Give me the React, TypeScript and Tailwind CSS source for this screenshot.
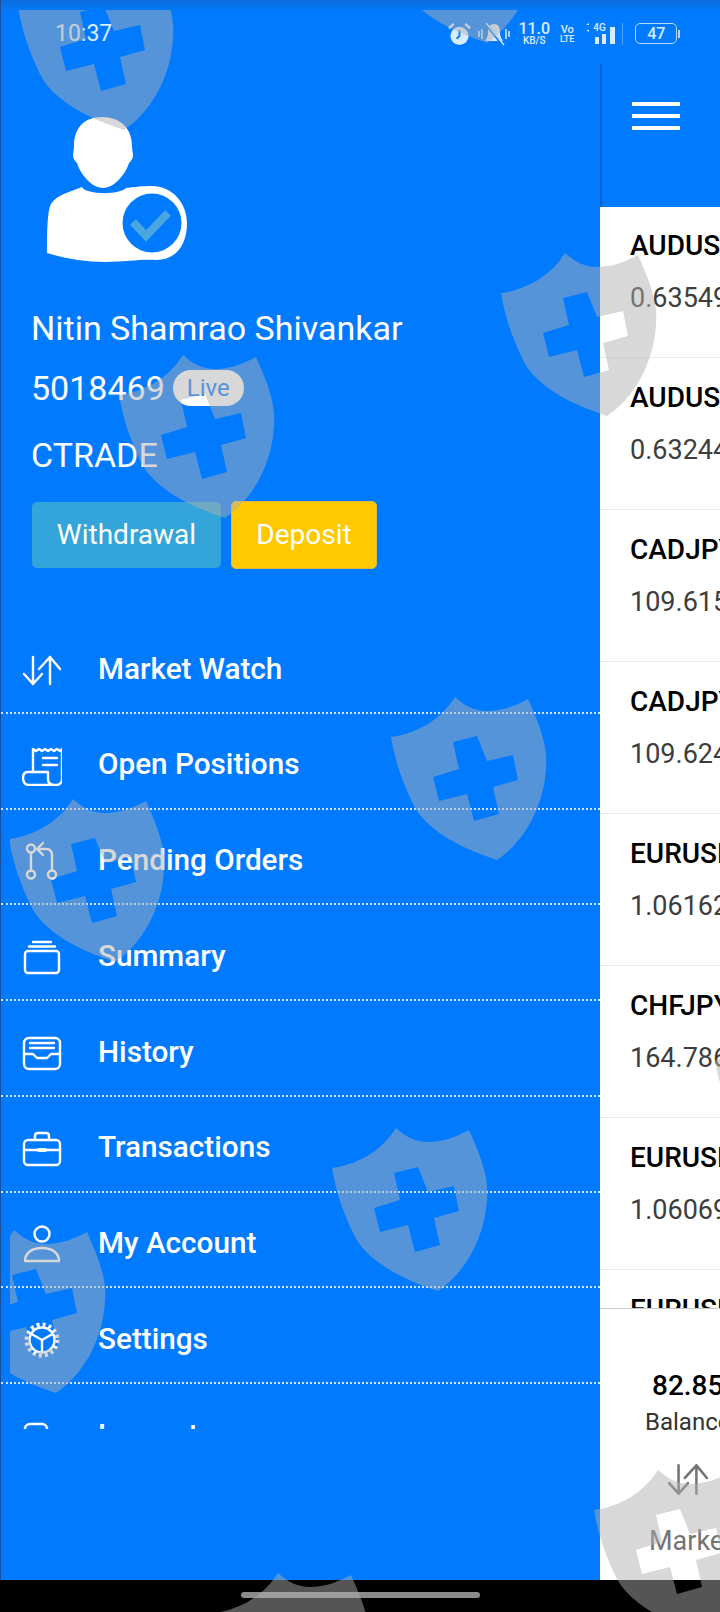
import React from 'react';

const SHIELD_OUTLINE =
  'M1 41C25 38 50 25 65 1C75 10 85 15 97 15C112 15 125 10 138 3C150 30 158 50 156 72C154 110 135 145 107 164C65 150 35 132 23 108C12 85 5 65 1 41Z';
const SHIELD_CROSS = 'M63 46L87 40L97 65L123 59L128 84L103 91L109 118L84 125L77 98L49 105L43 81L69 73Z';

// watermark shields, offsets are inside the clip layer
const shields = [
  'left-[7px] top-[-44px]',
  'left-[370px] top-[-131px]',
  'left-[490px] top-[242px]',
  'left-[108px] top-[344px]',
  'left-[380px] top-[686px]',
  'left-[-2px] top-[788px]',
  'left-[321px] top-[1117px]',
  'left-[-61px] top-[1219px]',
  'left-[704px] top-[1009px]',
  'left-[583px] top-[1459px]',
  'left-[203px] top-[1562px]',
];

function Shield({ className }: { className: string }) {
  return (
    <svg viewBox="0 0 160 165" className={`absolute h-[165px] w-[160px] ${className}`}>
      <path d={`${SHIELD_OUTLINE}${SHIELD_CROSS}`} fill="#afafaf" fillOpacity="0.486" fillRule="evenodd" />
    </svg>
  );
}

function Avatar() {
  return (
    <svg viewBox="0 0 142 148" className="ml-[45px] h-[148px] w-[142px]">
      <path
        fill="#fff"
        d="M56 0C38 0 28 11 28 29C28 33 27 36 27 38C27 42 29 44 31 46C34 56 45 71 57 71C69 71 80 56 83 46C85 44 87 42 87 38C87 36 86 33 86 29C86 11 74 0 56 0Z"
      />
      <path
        fill="#fff"
        d="M36 70C24 75 10 78 5 87C1 94 1 120 1 136C20 142 40 145 60 145C80 145 95 142 110 143C130 143 141 128 141 106C141 86 126 69 106 69C95 69 88 70 80 71C74 78 40 78 36 70Z"
      />
      <circle cx="106" cy="106" r="29.5" fill="#007bff" />
      <path d="M87 105L100 119L122 96" fill="none" stroke="#4aa5e0" strokeWidth="8" />
    </svg>
  );
}

function Svg({ children, className }: { children: React.ReactNode; className?: string }) {
  return (
    <svg
      viewBox="0 0 40 40"
      fill="none"
      stroke="currentColor"
      strokeWidth="2.4"
      strokeLinecap="round"
      strokeLinejoin="round"
      className={className ?? 'mt-[2px] h-10 w-10 shrink-0'}
    >
      {children}
    </svg>
  );
}

const ArrowsIcon = ({ className }: { className?: string }) => (
  <Svg className={className}>
    <path d="M11 7V34M2 24L11 34L20 24" />
    <path d="M28 34V7M17 19L28 7L38 19" />
  </Svg>
);

const icons: Record<string, React.ReactNode> = {
  market: <ArrowsIcon />,
  positions: (
    <Svg>
      <path d="M11 26V3L14 5L17 3L20 5L23 3L26 5L29 3L32 5L35 3L38 5L40 3V33C40 37 37 39 34 39" />
      <path d="M21 12H35M21 19H35" />
      <path d="M6 26H26V33C26 37 29 39 33 39H7C3 39 1 36 1 32C1 28 3 26 6 26Z" />
    </Svg>
  ),
  pending: (
    <Svg>
      <circle cx="9" cy="7.5" r="4" />
      <circle cx="9" cy="33.5" r="4" />
      <circle cx="30" cy="33.5" r="4" />
      <path d="M9 11.5V29.5M30 29.5V14C30 10 28 8 24 8H16M21 2L15 8L21 14" />
    </Svg>
  ),
  summary: (
    <Svg>
      <rect x="3" y="14" width="34" height="22" rx="3" />
      <path d="M7 9.500H33M11 5H29" />
    </Svg>
  ),
  history: (
    <Svg>
      <rect x="2" y="5" width="36" height="31" rx="5" />
      <path d="M2 21H11L15 25H25L29 21H38M8 10H32M8 15H32" />
    </Svg>
  ),
  transactions: (
    <Svg>
      <rect x="2" y="11" width="36" height="25" rx="4" />
      <path d="M13 11V7C13 5 14 4 16 4H24C26 4 27 5 27 7V11M2 21H38" />
      <path d="M17 21H23" strokeWidth="4" />
    </Svg>
  ),
  account: (
    <Svg>
      <circle cx="20" cy="10" r="7.500" />
      <path d="M3 37C3 29 10 24 20 24C30 24 37 29 37 37Z" />
    </Svg>
  ),
  settings: (
    <Svg>
      <circle cx="20" cy="20" r="12.500" />
      <circle cx="20" cy="20" r="15.500" strokeWidth="4" strokeDasharray="3 3.100" strokeLinecap="butt" />
      <path d="M20 20V32M20 20L9.500 14M20 20L30.500 14" />
    </Svg>
  ),
  logout: (
    <Svg>
      <rect x="3" y="8" width="22" height="28" rx="5" />
    </Svg>
  ),
};

const menu = [
  { key: 'market', label: 'Market Watch' },
  { key: 'positions', label: 'Open Positions' },
  { key: 'pending', label: 'Pending Orders' },
  { key: 'summary', label: 'Summary' },
  { key: 'history', label: 'History' },
  { key: 'transactions', label: 'Transactions' },
  { key: 'account', label: 'My Account' },
  { key: 'settings', label: 'Settings' },
  { key: 'logout', label: 'Log out' },
];

const quotes = [
  { symbol: 'AUDUSD', price: '0.63549' },
  { symbol: 'AUDUSD', price: '0.63244' },
  { symbol: 'CADJPY', price: '109.615' },
  { symbol: 'CADJPY', price: '109.624' },
  { symbol: 'EURUSD', price: '1.06162' },
  { symbol: 'CHFJPY', price: '164.786' },
  { symbol: 'EURUSD', price: '1.06069' },
  { symbol: 'EURUSD', price: '1.06071' },
];

function StatusBar() {
  return (
    <div className="flex h-[64px] shrink-0 items-center border-l border-[#1b4f9e] bg-gradient-to-b from-[#0b6cdc] via-[#007bff] via-[18%] to-[#007bff] pt-[3px] pl-[54px] text-white/85">
      <span className="text-[23px] leading-none">10:37</span>
      {/* alarm */}
      <svg viewBox="0 0 24 24" className="ml-[336px] h-[24px] w-[23px]">
        <circle cx="12" cy="14" r="9.500" fill="currentColor" />
        <path d="M12 8V14L9 17" fill="none" stroke="#007bff" strokeWidth="2" />
        <path d="M1 6L6 1.500M23 6L18 1.500" fill="none" stroke="currentColor" strokeWidth="2.500" />
      </svg>
      {/* muted bell */}
      <svg viewBox="0 0 32 24" className="ml-[7px] h-[24px] w-[32px]">
        <path d="M16 2C11 2 10 6 10 11C10 15 8 17 7 19H25C24 17 22 15 22 11C22 6 21 2 16 2Z" fill="currentColor" />
        <path d="M1 9V15M4 7V17M28 7V17M31 9V15" fill="none" stroke="currentColor" strokeWidth="1.500" />
        <path d="M8 2L25 23" fill="none" stroke="#007bff" strokeWidth="3" />
        <path d="M8 1L26 23" fill="none" stroke="currentColor" strokeWidth="1.300" />
      </svg>
      <div className="ml-[9px] flex w-[30px] flex-col items-center font-medium leading-none">
        <span className="text-[16px] leading-[14px]">11.0</span>
        <span className="text-[10px] leading-[10px]">KB/S</span>
      </div>
      <div className="ml-[10px] flex w-[16px] flex-col items-center font-medium leading-none">
        <span className="text-[11px] leading-[11px]">Vo</span>
        <span className="text-[9px] leading-[9px]">LTE</span>
      </div>
      <div className="relative ml-[9px] h-[24px] w-[34px]">
        <span className="absolute left-[9px] top-[1px] text-[10px] font-medium leading-none">4G</span>
        <svg viewBox="0 0 34 24" className="h-[24px] w-[34px]">
          <path d="M2 3L5 1L5 3ZM2 8L5 8L5 10Z" fill="currentColor" />
          <rect x="11" y="15" width="4" height="7" fill="currentColor" />
          <rect x="18" y="12" width="4" height="10" fill="currentColor" />
          <rect x="26" y="5" width="5" height="17" fill="currentColor" />
        </svg>
      </div>
      <div className="ml-[4px] h-[22px] w-px bg-white/30" />
      <div className="ml-[12px] flex h-[21px] w-[42px] items-center justify-center rounded-[5px] border-[1.5px] border-white/70 text-[16px] font-medium leading-none">
        47
      </div>
      <div className="ml-px h-[8px] w-[2px] bg-white/70" />
    </div>
  );
}

function Sidebar() {
  return (
    <aside className="flex w-[600px] shrink-0 flex-col border-l border-[#1b4f9e] bg-[#007bff] text-white">
      <div className="pt-[53px]">
        <Avatar />
      </div>
      <div className="pl-[30px]">
        <p className="mt-[34px] text-[34px] leading-[58px]">Nitin Shamrao Shivankar</p>
        <div className="mt-[2px] flex h-[58px] items-center">
          <span className="text-[34px] leading-none">5018469</span>
          <span className="ml-[8px] rounded-full bg-white px-[14px] text-[24px] leading-[36px] text-[#007bff]">Live</span>
        </div>
        <p className="mt-[9px] text-[34px] leading-[58px]">CTRADE</p>
        <div className="mt-[17px] ml-px flex items-center gap-[10px]">
          <button className="h-[66px] w-[189px] rounded-[5px] bg-[#33a5da] text-[28px]">Withdrawal</button>
          <button className="h-[68px] w-[146px] rounded-[5px] border border-[#e0b93a] bg-[#ffc800] text-[28px]">Deposit</button>
        </div>
      </div>
      <nav className="mt-[49px] h-[811px] overflow-hidden">
        {menu.map((item) => (
          <div
            key={item.key}
            className="flex h-[95.75px] items-center gap-[36px] border-b-2 border-dotted border-white/80 pt-[8px] pl-[21px]"
          >
            {icons[item.key]}
            <span className="text-[29.7px] font-medium">{item.label}</span>
          </div>
        ))}
      </nav>
    </aside>
  );
}

function MainPanel() {
  return (
    <main className="flex min-w-0 flex-1 flex-col overflow-hidden bg-white">
      <header className="flex h-[143px] shrink-0 flex-col gap-[8px] border-l-2 border-[#0a62c6] bg-[#007bff] pt-[38px] pl-[30px]">
        <div className="h-[4px] w-[48px] bg-white" />
        <div className="h-[4px] w-[48px] bg-white" />
        <div className="h-[4px] w-[48px] bg-white" />
      </header>
      <div className="h-[1102px] shrink-0 overflow-hidden border-b border-[#c9c9c9]">
        {quotes.map((q, i) => (
          <div
            key={i}
            className="h-[152px] border-b border-dotted border-[#d8d8d8] pt-[23px] pl-[30px] whitespace-nowrap first:h-[151px] first:pt-[22px]"
          >
            <p className="text-[28px] font-medium leading-[34px] text-black">{q.symbol}</p>
            <p className="mt-[18px] text-[27px] leading-[34px] text-[#3d3d3d]">{q.price}</p>
          </div>
        ))}
      </div>
      <div className="flex-1 whitespace-nowrap">
        <p className="mt-[60px] ml-[52px] text-[28px] font-medium leading-[34px] text-black">82.85</p>
        <p className="mt-[4px] ml-[45px] text-[24px] leading-[30px] text-[#333]">Balance</p>
        <div className="mt-[21px] ml-[66px] text-[#737373]">
          <ArrowsIcon className="h-[42px] w-[44px]" />
        </div>
        <p className="mt-[24px] ml-[49px] text-[27px] leading-[34px] text-[#737373]">Market</p>
      </div>
    </main>
  );
}

export default function App() {
  return (
    <div className="relative flex h-[1612px] w-[720px] flex-col overflow-hidden bg-black font-[Roboto,sans-serif]">
      <StatusBar />
      <div className="flex h-[1516px] shrink-0">
        <Sidebar />
        <MainPanel />
      </div>
      <div className="flex flex-1 justify-center pt-[12px]">
        <div className="h-[6px] w-[239px] rounded-full bg-[#8a8a8a]" />
      </div>
      {/* watermark sits on top of everything */}
      <div className="pointer-events-none absolute top-[10px] right-0 bottom-0 left-[10px] overflow-hidden">
        {shields.map((s) => (
          <Shield key={s} className={s} />
        ))}
      </div>
    </div>
  );
}
